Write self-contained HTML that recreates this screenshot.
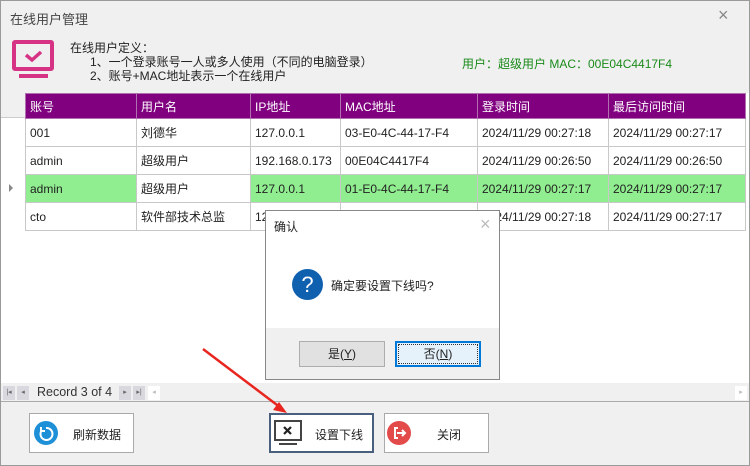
<!DOCTYPE html>
<html><head><meta charset="utf-8"><style>
*{margin:0;padding:0;box-sizing:border-box}
body{width:750px;height:466px;background:#f0f0f0;font-family:"Liberation Sans","Noto Sans CJK SC",sans-serif;font-size:12px;color:#222;position:relative;overflow:hidden}
.abs{position:absolute}
.win{left:0;top:0;width:750px;height:466px;border:1px solid #9a9a9a}
table{border-collapse:collapse;position:absolute;left:25px;top:93px;table-layout:fixed}
td{height:28px;border:1px solid #c8c8c8;padding-left:4px;white-space:nowrap;overflow:hidden;background:#fff}
tr.h td{height:25px;background:#800080;color:#fff;border-color:#b070b0}
tr.g td.gr{background:#90ee90}
.btn{background:#fff;border:1px solid #aaa;height:40px;font-size:12px}
.nb{position:absolute;top:386px;width:12px;height:14px;background:#d8d8de;color:#666;font-size:7px;text-align:center;line-height:14px}
</style></head><body>
<div class="abs win"></div>
<div class="abs" style="left:10px;top:9px;font-size:13px;color:#444">在线用户管理</div>
<div class="abs" style="left:718px;top:5px;font-size:18px;color:#888">×</div>
<svg class="abs" style="left:12px;top:40px" width="44" height="40"><rect x="2" y="2" width="38" height="27" fill="none" stroke="#d63384" stroke-width="4" rx="1"/><path d="M14 15l6 5 9-8" fill="none" stroke="#d63384" stroke-width="3.5"/><rect x="7" y="34" width="29" height="4" fill="#d63384"/></svg>
<div class="abs" style="left:70px;top:41px;line-height:14px">在线用户定义：<br>&nbsp;&nbsp;&nbsp;&nbsp;&nbsp;&nbsp;1、一个登录账号一人或多人使用（不同的电脑登录）<br>&nbsp;&nbsp;&nbsp;&nbsp;&nbsp;&nbsp;2、账号+MAC地址表示一个在线用户</div>
<div class="abs" style="left:462px;top:55px;color:#1a8a1a">用户：超级用户 MAC：00E04C4417F4</div>
<div class="abs" style="left:1px;top:93px;width:748px;height:290px;background:#fff"></div>
<div class="abs" style="left:1px;top:93px;width:24px;height:25px;background:#f0f0f0;border-bottom:1px solid #ccc"></div>
<div class="abs" style="left:9px;top:184px;width:0;height:0;border-left:4px solid #888;border-top:4px solid transparent;border-bottom:4px solid transparent"></div>
<table>
<colgroup><col width="111"><col width="114"><col width="90"><col width="137"><col width="131"><col width="137"></colgroup>
<tr class="h"><td>账号</td><td>用户名</td><td>IP地址</td><td>MAC地址</td><td>登录时间</td><td>最后访问时间</td></tr>
<tr><td>001</td><td>刘德华</td><td>127.0.0.1</td><td>03-E0-4C-44-17-F4</td><td>2024/11/29 00:27:18</td><td>2024/11/29 00:27:17</td></tr>
<tr><td>admin</td><td>超级用户</td><td>192.168.0.173</td><td>00E04C4417F4</td><td>2024/11/29 00:26:50</td><td>2024/11/29 00:26:50</td></tr>
<tr class="g"><td class="gr">admin</td><td>超级用户</td><td class="gr">127.0.0.1</td><td class="gr">01-E0-4C-44-17-F4</td><td class="gr">2024/11/29 00:27:17</td><td class="gr">2024/11/29 00:27:17</td></tr>
<tr><td>cto</td><td>软件部技术总监</td><td>127.0.0.1</td><td></td><td>2024/11/29 00:27:18</td><td>2024/11/29 00:27:17</td></tr>
</table>
<div class="abs" style="left:1px;top:383px;width:748px;height:19px;background:#f0f0f0;border-bottom:1px solid #aaa"></div>
<div class="nb" style="left:3px">|◂</div>
<div class="nb" style="left:17px">◂</div>
<div class="abs" style="left:37px;top:385px;color:#333;font-size:12.5px">Record 3 of 4</div>
<div class="nb" style="left:119px">▸</div>
<div class="nb" style="left:133px">▸|</div>
<div class="nb" style="left:148px;background:#fff;color:#bbb">◂</div>
<div class="nb" style="left:735px;background:#fff;color:#bbb">▸</div>
<div class="abs btn" style="left:29px;top:413px;width:105px"></div>
<svg class="abs" style="left:34px;top:421px" width="24" height="24"><circle cx="12" cy="12" r="12" fill="#1e90d8"/><path d="M8 9a6 6 0 1 0 4-2" fill="none" stroke="#fff" stroke-width="2"/><path d="M7 6v4h4" fill="none" stroke="#fff" stroke-width="2"/></svg>
<div class="abs" style="left:73px;top:426px">刷新数据</div>
<div class="abs btn" style="left:269px;top:413px;width:105px;border:2px solid #4a5e7e"></div>
<svg class="abs" style="left:274px;top:420px" width="28" height="26"><rect x="1" y="1" width="26" height="19" fill="none" stroke="#444" stroke-width="2"/><path d="M10 7l7 7M17 7l-7 7" stroke="#222" stroke-width="2.2"/><rect x="5" y="23" width="18" height="2" fill="#444"/></svg>
<div class="abs" style="left:315px;top:426px">设置下线</div>
<div class="abs btn" style="left:384px;top:413px;width:105px"></div>
<svg class="abs" style="left:387px;top:421px" width="24" height="24"><circle cx="12" cy="12" r="12" fill="#e34a4a"/><path d="M11 7H8v10h3" fill="none" stroke="#fff" stroke-width="2"/><path d="M10 12h8M15 9l3 3-3 3" fill="none" stroke="#fff" stroke-width="2"/></svg>
<div class="abs" style="left:437px;top:426px">关闭</div>
<div class="abs" style="left:265px;top:210px;width:235px;height:170px;background:#fff;border:1px solid #888"></div>
<div class="abs" style="left:266px;top:328px;width:233px;height:51px;background:#f0f0f0"></div>
<div class="abs" style="left:274px;top:218px">确认</div>
<div class="abs" style="left:480px;top:214px;font-size:18px;color:#bbb">×</div>
<div class="abs" style="left:292px;top:269px;width:31px;height:31px;border-radius:50%;background:#1060b0;color:#fff;font-size:22px;text-align:center;line-height:31px">?</div>
<div class="abs" style="left:331px;top:277px">确定要设置下线吗?</div>
<div class="abs" style="left:299px;top:341px;width:86px;height:26px;background:#e1e1e1;border:1px solid #adadad;text-align:center;line-height:24px">是(<u>Y</u>)</div>
<div class="abs" style="left:395px;top:341px;width:86px;height:26px;background:#e5f1fb;border:2px solid #0078d7;text-align:center;line-height:22px;outline:1px dotted #333;outline-offset:-4px">否(<u>N</u>)</div>
<svg class="abs" style="left:0;top:0" width="750" height="466"><path d="M203 349L281 408" stroke="#e8251f" stroke-width="2.5"/><path d="M287 413l-14-3 6-8z" fill="#e8251f"/></svg>
</body></html>
